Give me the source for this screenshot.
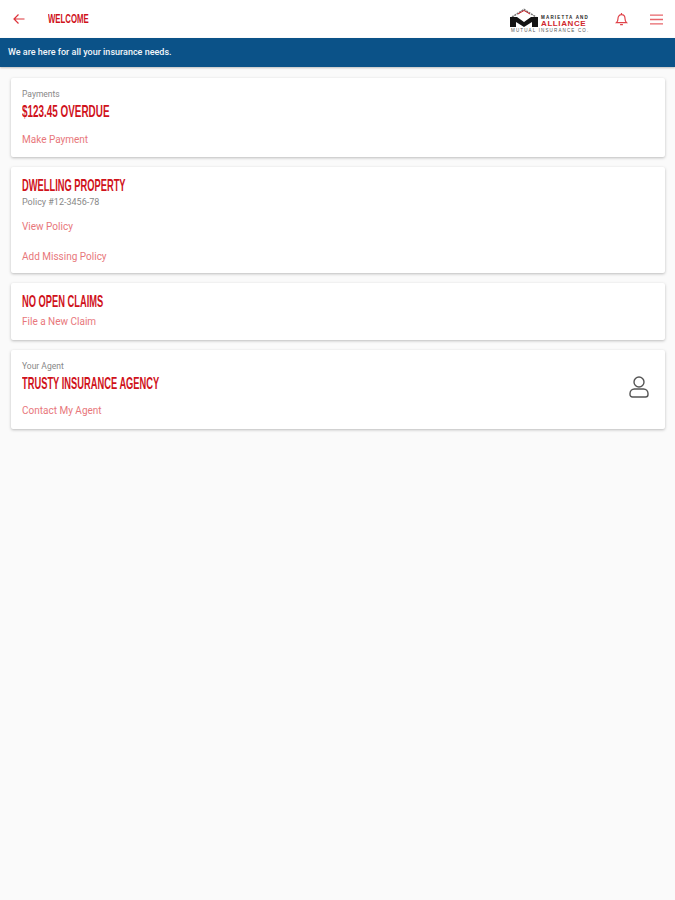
<script>
  const red = '#d0121b';
</script>

<div class="page">
  <header class="top">
    <svg class="back" width="12" height="12" viewBox="0 0 12 12" fill="none" stroke="#dd343b" stroke-width="1.200"><path d="M11.500 6H1M5.500 1.500 1 6l4.500 4.500"/></svg>
    <span class="title">WELCOME</span>
    <div class="spacer"></div>
    <div class="logo">
      <svg width="30" height="20" viewBox="0 0 30 20">
        <path d="M2 9 14 1.500 26 9" fill="none" stroke="#777" stroke-width="1.500" stroke-dasharray="2 .8"/>
        <path d="M8 6 14 2.500l6 3.500" fill="none" stroke="#c9242b" stroke-width="1"/>
        <path d="M0 9h7l7 5 7-5h7v10h-6v-5l-8 5-8-5v5H0z" fill="#141414"/>
      </svg>
      <div class="logotext">
        <span class="l1">MARIETTA AND</span>
        <span class="l2">ALLIANCE</span>
      </div>
      <span class="l3">MUTUAL INSURANCE CO.</span>
    </div>
    <svg class="bell" width="13" height="14" viewBox="0 0 14 15" fill="none" stroke="#e0434a" stroke-width="1.300"><path d="M1.500 11.500c1.300-1.200 1.700-2.300 1.700-4.300 0-2.500 1.500-4.400 3.800-4.400s3.800 1.900 3.800 4.400c0 2 .4 3.100 1.700 4.300zM5.500 13.500h3M7 1v1.500"/></svg>
    <svg class="menu" width="13" height="11" viewBox="0 0 13 11" fill="none" stroke="#e8666b" stroke-width="1.300"><path d="M0 1.200h13M0 5.500h13M0 9.800h13"/></svg>
  </header>

  <div class="banner">We are here for all your insurance needs.</div>

  <main class="cards">
    <section class="card pay">
      <div class="label">Payments</div>
      <h2 class="wide">$123.45 OVERDUE</h2>
      <a class="first">Make Payment</a>
    </section>

    <section class="card dwell">
      <h2>DWELLING PROPERTY</h2>
      <div class="label policy">Policy #12-3456-78</div>
      <a class="view">View Policy</a>
      <a class="add">Add Missing Policy</a>
    </section>

    <section class="card claims">
      <h2>NO OPEN CLAIMS</h2>
      <a>File a New Claim</a>
    </section>

    <section class="card agent">
      <div>
        <div class="label">Your Agent</div>
        <h2>TRUSTY INSURANCE AGENCY</h2>
        <a class="first">Contact My Agent</a>
      </div>
      <svg width="20" height="22" viewBox="0 0 20 22" fill="none" stroke="#555" stroke-width="1.400">
        <circle cx="10" cy="6" r="5"/>
        <path d="M5.500 13h9c2.500 0 4.500 2 4.500 4.500v1c0 1.500-1 2.500-2.500 2.500h-13C2 21 1 20 1 18.500v-1C1 15 3 13 5.500 13z"/>
      </svg>
    </section>
  </main>
</div>

<style>
  :global(body) {
    margin: 0;
    background: #fafafa;
  }
  .page {
    min-height: 900px;
    background: #fafafa;
    font-family: Roboto, "Liberation Sans", sans-serif;
  }
  .top {
    height: 38px;
    background: #fff;
    display: flex;
    align-items: center;
    padding: 0 12px 0 13px;
    box-sizing: border-box;
  }
  .title {
    display: inline-block;
    margin-left: 23px;
    font: 700 12px "Liberation Sans", sans-serif;
    color: #d0121b;
    transform: scaleX(0.65);
    transform-origin: left center;
  }
  .spacer { flex: 1; }
  .logo {
    position: relative;
    width: 81px;
    height: 22px;
    margin-right: 24px;
    margin-top: 1px;
  }
  .logo svg { position: absolute; left: 0; top: -1px; }
  .logotext {
    position: absolute;
    left: 31px;
    top: 6px;
    display: flex;
    flex-direction: column;
    font-family: "Liberation Sans", sans-serif;
    font-weight: 700;
    white-space: nowrap;
  }
  .l1 { font-size: 4.500px; line-height: 5px; color: #222; letter-spacing: 1.200px; }
  .l2 { font-size: 8px; line-height: 8px; letter-spacing: .6px; color: #d0262c; }
  .l3 {
    position: absolute;
    left: 1px;
    top: 20px;
    line-height: 4px;
    font-size: 4.500px;
    color: #555;
    letter-spacing: 1.150px;
    white-space: nowrap;
    font-family: "Liberation Sans", sans-serif;
  }
  .bell { margin-right: 22px; }
  .banner {
    height: 29px;
    background: #0b5288;
    color: #f2f6fa;
    font-size: 9px;
    font-weight: 500;
    line-height: 28px;
    padding-left: 8px;
    box-shadow: 0 1px 2px rgba(0,0,0,.25);
  }
  .cards {
    display: flex;
    flex-direction: column;
    gap: 10px;
    padding: 11px 10px 0 11px;
  }
  .card {
    background: #fff;
    border-radius: 2px;
    box-shadow: 0 1px 3px rgba(0,0,0,.25);
    padding: 0 11px;
    display: flex;
    flex-direction: column;
    align-items: flex-start;
    box-sizing: border-box;
  }
  h2 {
    margin: 0;
    font: 700 16.500px/18px "Liberation Sans", sans-serif;
    color: #d0121b;
    white-space: nowrap;
    transform: scaleX(0.565);
    transform-origin: left center;
  }
  h2.wide { transform: scaleX(0.6); }
  .label {
    font-size: 8.500px;
    line-height: 11px;
    color: #888;
  }
  a {
    font-size: 10px;
    line-height: 13px;
    color: #e8777b;
  }
  .pay { height: 79px; padding-top: 11px; }
  .pay h2 { margin-top: 2px; }
  .first { margin-top: 12px; display: block; }
  .pay .first { margin-top: 13px; }
  .dwell { height: 106px; padding-top: 9px; }
  .policy { margin-top: 3px; font-size: 9px; }
  .view { margin-top: 12px; }
  .add { margin-top: 17px; }
  .claims { height: 57px; padding-top: 9px; }
  .claims a { margin-top: 5px; }
  .agent {
    height: 79px;
    padding: 11px 16px 0 11px;
    flex-direction: row;
    justify-content: space-between;
    align-items: flex-start;
  }
  .agent svg { margin-top: 15px; }
  .agent h2 { margin-top: 2px; }
</style>
